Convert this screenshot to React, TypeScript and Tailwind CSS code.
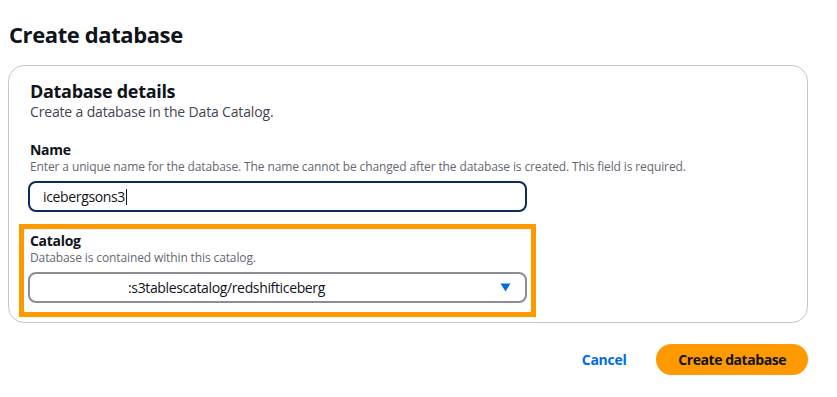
function Field({
  label,
  hint,
  children,
}: {
  label: string
  hint: string
  children: React.ReactNode
}) {
  return (
    <div>
      <div className="text-[14px] font-bold leading-[18px] tracking-[-0.3px] text-[#0f141a]">{label}</div>
      <div className="text-[12px] leading-[16px] tracking-[-0.12px] text-[#656871]">{hint}</div>
      <div className="mt-[6px]">{children}</div>
    </div>
  )
}

export default function App() {
  return (
    <div className="w-[837px] h-[397px] bg-white font-['Open_Sans',_'Liberation_Sans',_sans-serif] text-[#0f141a]">
      <h1 className="pl-[9px] pt-[20px] text-[22px] font-bold leading-[28px] tracking-[-0.4px]">Create database</h1>

      <section className="mt-[17px] ml-[8px] w-[800px] rounded-[16px] border border-[#c6c6cd] pl-[21px] pt-[14px] pb-[5px]">
        <h2 className="text-[18px] font-bold leading-[22px] tracking-[-0.3px]">Database details</h2>
        <p className="text-[14px] leading-[20px] tracking-[-0.16px] text-[#424650]">Create a database in the Data Catalog.</p>

        <div className="mt-[19px]">
          <Field
            label="Name"
            hint="Enter a unique name for the database. The name cannot be changed after the database is created. This field is required."
          >
            <div className="flex h-[31px] w-[499px] -ml-[2px] items-center rounded-[8px] border-2 border-[#0b2c5e] pl-[13px] text-[14px] tracking-[-0.35px]">
              <span>icebergsons3</span>
              <span className="ml-[1px] h-[16px] w-[1px] bg-[#0f141a]" />
            </div>
          </Field>
        </div>

        <div className="mt-[12px] -ml-[11px] w-[517px] border-[5px] border-[#ff9900] pl-[6px] pr-[4px] pt-[3px] pb-[9px]">
          <Field label="Catalog" hint="Database is contained within this catalog.">
            <div className="flex h-[31px] w-[499px] -ml-[2px] items-center rounded-[8px] border-2 border-[#8c8c94] pl-[98px] pr-[14px] text-[14px] tracking-[-0.35px]">
              <span className="flex-1">:s3tablescatalog/redshifticeberg</span>
              <svg width="11" height="9" viewBox="0 0 11 9">
                <path d="M0.5 0.5 H10.5 L5.5 8.5 Z" fill="#006ce0" />
              </svg>
            </div>
          </Field>
        </div>
      </section>

      <div className="mt-[21px] flex items-center justify-end pr-[29px]">
        <button className="text-[14px] font-bold tracking-[-0.3px] text-[#006ce0]">Cancel</button>
        <button className="ml-[30px] h-[31px] rounded-full bg-[#ff9900] px-[22px] text-[14px] font-bold tracking-[-0.45px] text-[#0f141a]">
          Create database
        </button>
      </div>
    </div>
  )
}
